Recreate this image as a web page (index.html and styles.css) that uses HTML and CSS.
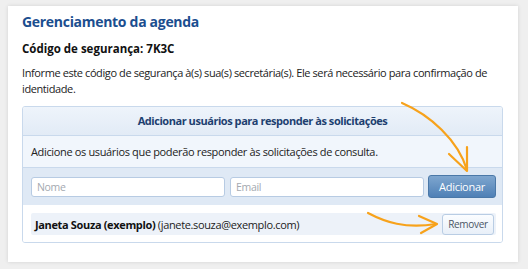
FILE: index.html
```html
<!DOCTYPE html>
<html>
<head>
  <meta charset="utf-8">
  <title>Gerenciamento da agenda</title>
  <link rel="stylesheet" href="styles.css">
</head>
<body>
  <div class="card">
    <h1>Gerenciamento da agenda</h1>
    <p class="code">Código de segurança: 7K3C</p>
    <p class="info">Informe este código de segurança à(s) sua(s) secretária(s). Ele será necessário para confirmação de identidade.</p>

    <div class="panel">
      <div class="panel-head">Adicionar usuários para responder às solicitações</div>
      <div class="panel-desc">Adicione os usuários que poderão responder às solicitações de consulta.</div>
      <div class="panel-form">
        <input type="text" class="field" placeholder="Nome">
        <input type="text" class="field" placeholder="Email">
        <button class="btn-add">Adicionar</button>
      </div>
      <div class="panel-list">
        <div class="user-row">
          <span class="user-name"><b>Janeta Souza (exemplo)</b> (janete.souza@exemplo.com)</span>
          <button class="btn-remove">Remover</button>
        </div>
      </div>
    </div>
  </div>

  <!-- orange hint arrows -->
  <svg class="arrows" width="528" height="269" viewBox="0 0 528 269">
    <g fill="none" stroke="#f7a21b" stroke-width="2.2" stroke-linecap="round" stroke-linejoin="round">
      <path d="M402 103 C430 115 458 140 467 170"/>
      <path d="M467 147 L467 171 L449 154"/>
      <path d="M368 213 C385 222 405 229 436 224"/>
      <path d="M419 216 L437 224 L421 233"/>
    </g>
  </svg>
</body>
</html>
```

FILE: styles.css
```css
body {
  margin: 0;
  padding: 6px 10px 7px 8px;
  background-color: #efefef;
  font-family: 'Open Sans', 'Noto Sans', Arial, sans-serif;
  font-size: 11.5px;
  color: #222;
  position: relative;
}
.card {
  background-color: white;
  box-shadow: 0 0 4px rgba(0, 0, 0, 0.12);
  padding: 6px 15px 20px 14px;
  height: 230px;
}
h1 {
  margin: 0;
  font-size: 14px;
  letter-spacing: -0.3px;
  line-height: 20px;
  color: #1b4e8f;
  font-weight: bold;
}
.code {
  margin: 8px 0 0;
  font-weight: bold;
  line-height: 18px;
  color: #111;
}
.info {
  margin: 7px 0 0;
  font-size: 11px;
  letter-spacing: -0.4px;
  line-height: 16px;
}
.panel {
  margin-top: 9px;
  border: 1px solid #c9d9ec;
  border-radius: 3px;
  overflow: hidden;
  font-size: 11px;
  letter-spacing: -0.35px;
}
.panel-head {
  height: 28px;
  line-height: 27px;
  text-align: center;
  font-weight: bold;
  letter-spacing: -0.45px;
  color: #1d3f70;
  background: linear-gradient(#eef4fb, #e2ebf6);
  border-bottom: 1px solid #c9d9ec;
}
.panel-desc {
  height: 31px;
  line-height: 32px;
  padding-left: 8px;
  background-color: #f1f6fc;
  border-bottom: 1px solid #c9d9ec;
}
.panel-form {
  display: flex;
  align-items: center;
  gap: 5px;
  height: 37px;
  padding: 0 6px 0 8px;
  background-color: #dfe9f5;
}
.field {
  width: 194px;
  height: 20px;
  box-sizing: border-box;
  border: 1px solid #b7cbe3;
  border-radius: 3px;
  padding: 0 5px;
  font-family: inherit;
  font-size: 10.5px;
  letter-spacing: -0.3px;
  margin: 0;
}
.field::placeholder {
  color: #a4a9b0;
}
.btn-add {
  width: 68px;
  height: 23px;
  margin-left: -1px;
  border: 1px solid #4a78a8;
  border-radius: 3px;
  background: linear-gradient(#7ea6cf, #4f80b6);
  color: white;
  font-family: inherit;
  font-size: 11px;
  letter-spacing: -0.3px;
  padding: 0;
}
.panel-list {
  padding: 8px 6px 7px 8px;
  background: white;
}
.user-row {
  display: flex;
  align-items: center;
  justify-content: space-between;
  height: 22px;
  padding-left: 4px;
  background-color: #edf2f9;
  border-radius: 2px;
}
.user-name b {
  color: #111;
}
.btn-remove {
  width: 52px;
  height: 21px;
  margin-right: 2px;
  border: 1px solid #b9cde4;
  border-radius: 3px;
  background: linear-gradient(#fbfdff, #e8eff8);
  color: #4a5566;
  font-family: inherit;
  font-size: 10px;
  letter-spacing: -0.3px;
  padding: 0;
}
.arrows {
  position: absolute;
  top: 0;
  left: 0;
}
```
